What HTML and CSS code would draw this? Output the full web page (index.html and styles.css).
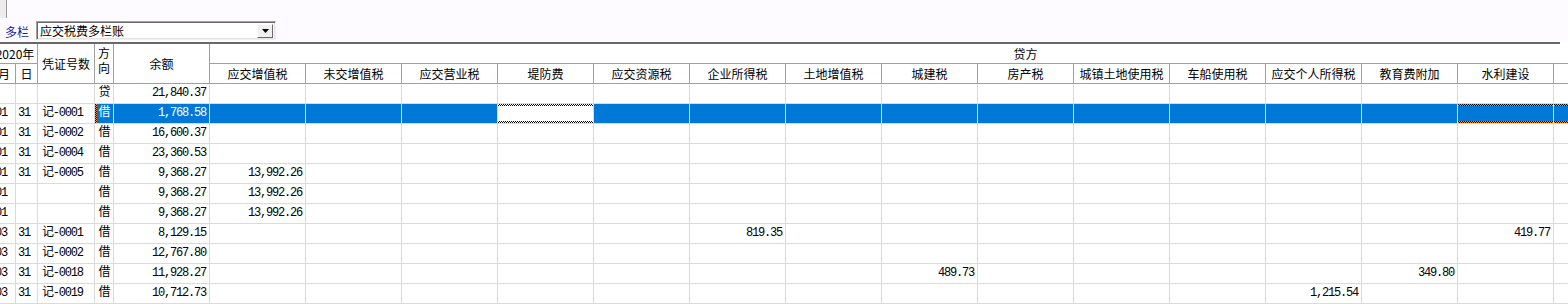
FILE: index.html
```html
<!DOCTYPE html>
<html lang="zh-CN">
<head>
    <meta charset="UTF-8">
    <title>应交税费多栏账</title>
    <link rel="stylesheet" href="styles.css">
</head>
<body>
    <div class="topbar">
        <div class="corner"></div>
        <div class="filter">
            <span class="filter-label">多栏</span>
            <div class="combo">
                <span class="combo-text">应交税费多栏账</span>
                <span class="combo-btn">
                    <svg width="7" height="4" viewBox="0 0 7 4"><polygon points="0,0 7,0 3.5,4" fill="#000"/></svg>
                </span>
            </div>
        </div>
    </div>
    <div class="rule"></div>

    <table class="ledger">
        <colgroup>
            <col class="c-m"><col class="c-d"><col class="c-v"><col class="c-dir"><col class="c-bal">
            <col class="c-tax"><col class="c-tax"><col class="c-tax"><col class="c-tax"><col class="c-tax">
            <col class="c-tax"><col class="c-tax"><col class="c-tax"><col class="c-tax"><col class="c-tax">
            <col class="c-tax"><col class="c-tax"><col class="c-tax"><col class="c-tax"><col class="c-tax">
            <col class="c-tax"><col class="c-tax">
        </colgroup>
        <thead>
            <tr>
                <th colspan="2">2020年</th>
                <th rowspan="2">凭证号数</th>
                <th rowspan="2" class="dir-head">方向</th>
                <th rowspan="2">余额</th>
                <th colspan="17">贷方</th>
            </tr>
            <tr>
                <th>月</th>
                <th>日</th>
                <th>应交增值税</th>
                <th>未交增值税</th>
                <th>应交营业税</th>
                <th>堤防费</th>
                <th>应交资源税</th>
                <th>企业所得税</th>
                <th>土地增值税</th>
                <th>城建税</th>
                <th>房产税</th>
                <th>城镇土地使用税</th>
                <th>车船使用税</th>
                <th>应交个人所得税</th>
                <th>教育费附加</th>
                <th>水利建设</th>
                <th></th>
                <th></th>
                <th></th>
            </tr>
        </thead>
        <tbody>
            <tr>
                <td></td><td></td><td></td><td class="dir">贷</td><td class="num">21,840.37</td>
                <td></td><td></td><td></td><td></td><td></td><td></td><td></td><td></td><td></td><td></td><td></td><td></td><td></td><td></td><td></td><td></td><td></td>
            </tr>
            <tr class="sel">
                <td>01</td><td>31</td><td>记-0001</td><td class="dir hl edge">借</td><td class="num hl">1,768.58</td>
                <td class="hl"></td><td class="hl"></td><td class="hl"></td><td class="focus"></td><td class="hl"></td>
                <td class="hl"></td><td class="hl"></td><td class="hl"></td><td class="hl"></td><td class="hl"></td>
                <td class="hl"></td><td class="hl"></td><td class="hl"></td><td class="hl range"></td><td class="hl range"></td>
                <td class="hl"></td><td class="hl"></td>
            </tr>
            <tr>
                <td>01</td><td>31</td><td>记-0002</td><td class="dir">借</td><td class="num">16,600.37</td>
                <td></td><td></td><td></td><td></td><td></td><td></td><td></td><td></td><td></td><td></td><td></td><td></td><td></td><td></td><td></td><td></td><td></td>
            </tr>
            <tr>
                <td>01</td><td>31</td><td>记-0004</td><td class="dir">借</td><td class="num">23,360.53</td>
                <td></td><td></td><td></td><td></td><td></td><td></td><td></td><td></td><td></td><td></td><td></td><td></td><td></td><td></td><td></td><td></td><td></td>
            </tr>
            <tr>
                <td>01</td><td>31</td><td>记-0005</td><td class="dir">借</td><td class="num">9,368.27</td>
                <td class="num">13,992.26</td><td></td><td></td><td></td><td></td><td></td><td></td><td></td><td></td><td></td><td></td><td></td><td></td><td></td><td></td><td></td><td></td>
            </tr>
            <tr>
                <td>01</td><td></td><td></td><td class="dir">借</td><td class="num">9,368.27</td>
                <td class="num">13,992.26</td><td></td><td></td><td></td><td></td><td></td><td></td><td></td><td></td><td></td><td></td><td></td><td></td><td></td><td></td><td></td><td></td>
            </tr>
            <tr>
                <td>01</td><td></td><td></td><td class="dir">借</td><td class="num">9,368.27</td>
                <td class="num">13,992.26</td><td></td><td></td><td></td><td></td><td></td><td></td><td></td><td></td><td></td><td></td><td></td><td></td><td></td><td></td><td></td><td></td>
            </tr>
            <tr>
                <td>03</td><td>31</td><td>记-0001</td><td class="dir">借</td><td class="num">8,129.15</td>
                <td></td><td></td><td></td><td></td><td></td><td class="num">819.35</td><td></td><td></td><td></td><td></td><td></td><td></td><td></td><td class="num">419.77</td><td></td><td></td><td></td>
            </tr>
            <tr>
                <td>03</td><td>31</td><td>记-0002</td><td class="dir">借</td><td class="num">12,767.80</td>
                <td></td><td></td><td></td><td></td><td></td><td></td><td></td><td></td><td></td><td></td><td></td><td></td><td></td><td></td><td></td><td></td><td></td>
            </tr>
            <tr>
                <td>03</td><td>31</td><td>记-0018</td><td class="dir">借</td><td class="num">11,928.27</td>
                <td></td><td></td><td></td><td></td><td></td><td></td><td></td><td class="num">489.73</td><td></td><td></td><td></td><td></td><td class="num">349.80</td><td></td><td></td><td></td><td></td>
            </tr>
            <tr>
                <td>03</td><td>31</td><td>记-0019</td><td class="dir">借</td><td class="num">10,712.73</td>
                <td></td><td></td><td></td><td></td><td></td><td></td><td></td><td></td><td></td><td></td><td></td><td class="num">1,215.54</td><td></td><td></td><td></td><td></td><td></td>
            </tr>
        </tbody>
    </table>
</body>
</html>
```

FILE: styles.css
```css
body {
    margin: 0;
    background: #fff;
    overflow: hidden;
    font-family: "Noto Sans CJK SC", sans-serif;
    font-size: 12px;
    color: #000;
}
.topbar {
    height: 42px;
    background: #fdfbff;
}
.corner {
    width: 6px;
    height: 18px;
    background: #ececec;
    border-right: 1px solid #9a9a9a;
}
.filter {
    display: flex;
    align-items: center;
    gap: 7px;
    margin-top: 3px;
    padding-left: 5px;
    height: 19px;
}
.filter-label {
    color: #1a1aa8;
    line-height: 19px;
    padding-top: 2px;
}
.combo {
    box-sizing: border-box;
    width: 240px;
    height: 19px;
    display: flex;
    align-items: center;
    justify-content: space-between;
    background: #fff;
    border: 1px solid;
    border-color: #a0a0a0 #f0f0f0 #f0f0f0 #a0a0a0;
    box-shadow: inset 1px 1px 0 #696969, inset -1px -1px 0 #e3e3e3;
}
.combo-text {
    padding-left: 3px;
    line-height: 17px;
}
.combo-btn {
    box-sizing: border-box;
    width: 16px;
    height: 14px;
    margin-right: 2px;
    display: flex;
    align-items: center;
    justify-content: center;
    background: #f0f0f0;
    border: 1px solid;
    border-color: #fff #696969 #696969 #fff;
}
.rule {
    height: 2px;
    margin-right: 8px;
    background: #696969;
}
.ledger {
    table-layout: fixed;
    width: 1849px;
    margin-left: -7px;
    border-collapse: separate;
    border-spacing: 0;
}
.c-m { width: 23px; }
.c-d { width: 22px; }
.c-v { width: 57px; }
.c-dir { width: 19px; }
.c-bal { width: 96px; }
.c-tax { width: 96px; }
.ledger th {
    height: 20px;
    padding: 0;
    font-weight: normal;
    line-height: 19px;
    text-align: center;
    white-space: nowrap;
    overflow: hidden;
    border-right: 1px solid #a0a0a0;
    border-bottom: 1px solid #a0a0a0;
    box-sizing: border-box;
}
.ledger th.dir-head {
    white-space: normal;
    vertical-align: top;
    line-height: 15px;
    padding-top: 1px;
}
.ledger tr {
    height: 20px;
}
.ledger td {
    height: 20px;
    padding: 0 0 0 2px;
    box-sizing: border-box;
    font-family: "Liberation Mono", "Noto Sans CJK SC", monospace;
    font-size: 12px;
    letter-spacing: -1.2px;
    line-height: 19px;
    white-space: nowrap;
    overflow: hidden;
    border-right: 1px solid #dadada;
    border-bottom: 1px solid #dadada;
}
.ledger td:nth-child(3) {
    padding-left: 4px;
}
.ledger td.dir {
    padding: 0;
    text-align: center;
}
.ledger td.num {
    padding: 0 3px 0 0;
    text-align: right;
}
.ledger td.hl {
    background: #0078d7;
    color: #fff;
}
.ledger td.edge {
    background: repeating-conic-gradient(#ff8c1a 0 25%, #000 0 50%) left top / 2px 2px repeat-y, #0078d7;
}
.ledger td.focus {
    background:
        repeating-conic-gradient(#000 0 25%, #fff 0 50%) left top / 2px 2px repeat-x,
        repeating-conic-gradient(#000 0 25%, #fff 0 50%) left bottom / 2px 2px repeat-x,
        #fff;
}
.ledger td.range {
    background:
        repeating-conic-gradient(#ff8c1a 0 25%, #000 0 50%) left top / 2px 2px repeat-x,
        repeating-conic-gradient(#ff8c1a 0 25%, #000 0 50%) left bottom / 2px 2px repeat-x,
        #0078d7;
}
```
